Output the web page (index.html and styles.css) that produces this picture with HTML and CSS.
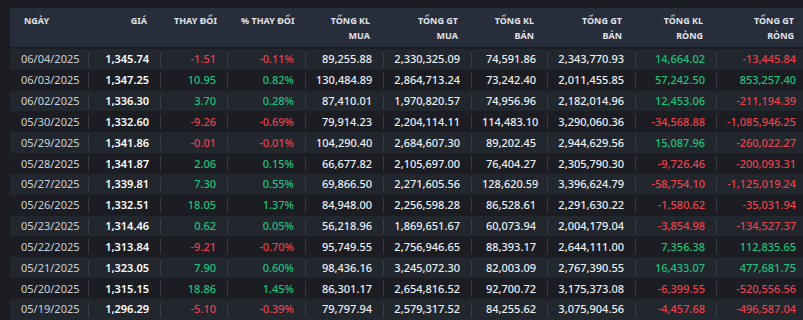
FILE: index.html
```html
<!DOCTYPE html>
<html lang="vi">
<head>
    <meta charset="UTF-8">
    <meta name="viewport" content="width=device-width, initial-scale=1.0">
    <title>Lịch sử giao dịch</title>
    <link rel="stylesheet" href="styles.css">
</head>
<body>
    <div class="table-wrap">
        <table class="trade-table">
            <colgroup>
                <col class="w-date"><col class="w-price"><col class="w-chg"><col class="w-pct">
                <col class="w-klmua"><col class="w-gtmua"><col class="w-klban"><col class="w-gtban">
                <col class="w-klrong"><col class="w-gtrong">
            </colgroup>
            <thead>
                <tr>
                    <th class="left">NGÀY</th>
                    <th>GIÁ</th>
                    <th>THAY ĐỔI</th>
                    <th>% THAY ĐỔI</th>
                    <th>TỔNG KL<br>MUA</th>
                    <th>TỔNG GT<br>MUA</th>
                    <th>TỔNG KL<br>BÁN</th>
                    <th>TỔNG GT<br>BÁN</th>
                    <th>TỔNG KL<br>RÒNG</th>
                    <th>TỔNG GT<br>RÒNG</th>
                </tr>
            </thead>
            <tbody>
                <tr><td class="date">06/04/2025</td><td class="price">1,345.74</td><td class="down">-1.51</td><td class="down">-0.11%</td><td>89,255.88</td><td>2,330,325.09</td><td>74,591.86</td><td>2,343,770.93</td><td class="up">14,664.02</td><td class="down">-13,445.84</td></tr>
                <tr><td class="date">06/03/2025</td><td class="price">1,347.25</td><td class="up">10.95</td><td class="up">0.82%</td><td>130,484.89</td><td>2,864,713.24</td><td>73,242.40</td><td>2,011,455.85</td><td class="up">57,242.50</td><td class="up">853,257.40</td></tr>
                <tr><td class="date">06/02/2025</td><td class="price">1,336.30</td><td class="up">3.70</td><td class="up">0.28%</td><td>87,410.01</td><td>1,970,820.57</td><td>74,956.96</td><td>2,182,014.96</td><td class="up">12,453.06</td><td class="down">-211,194.39</td></tr>
                <tr><td class="date">05/30/2025</td><td class="price">1,332.60</td><td class="down">-9.26</td><td class="down">-0.69%</td><td>79,914.23</td><td>2,204,114.11</td><td>114,483.10</td><td>3,290,060.36</td><td class="down">-34,568.88</td><td class="down">-1,085,946.25</td></tr>
                <tr><td class="date">05/29/2025</td><td class="price">1,341.86</td><td class="down">-0.01</td><td class="down">-0.01%</td><td>104,290.40</td><td>2,684,607.30</td><td>89,202.45</td><td>2,944,629.56</td><td class="up">15,087.96</td><td class="down">-260,022.27</td></tr>
                <tr><td class="date">05/28/2025</td><td class="price">1,341.87</td><td class="up">2.06</td><td class="up">0.15%</td><td>66,677.82</td><td>2,105,697.00</td><td>76,404.27</td><td>2,305,790.30</td><td class="down">-9,726.46</td><td class="down">-200,093.31</td></tr>
                <tr><td class="date">05/27/2025</td><td class="price">1,339.81</td><td class="up">7.30</td><td class="up">0.55%</td><td>69,866.50</td><td>2,271,605.56</td><td>128,620.59</td><td>3,396,624.79</td><td class="down">-58,754.10</td><td class="down">-1,125,019.24</td></tr>
                <tr><td class="date">05/26/2025</td><td class="price">1,332.51</td><td class="up">18.05</td><td class="up">1.37%</td><td>84,948.00</td><td>2,256,598.28</td><td>86,528.61</td><td>2,291,630.22</td><td class="down">-1,580.62</td><td class="down">-35,031.94</td></tr>
                <tr><td class="date">05/23/2025</td><td class="price">1,314.46</td><td class="up">0.62</td><td class="up">0.05%</td><td>56,218.96</td><td>1,869,651.67</td><td>60,073.94</td><td>2,004,179.04</td><td class="down">-3,854.98</td><td class="down">-134,527.37</td></tr>
                <tr><td class="date">05/22/2025</td><td class="price">1,313.84</td><td class="down">-9.21</td><td class="down">-0.70%</td><td>95,749.55</td><td>2,756,946.65</td><td>88,393.17</td><td>2,644,111.00</td><td class="up">7,356.38</td><td class="up">112,835.65</td></tr>
                <tr><td class="date">05/21/2025</td><td class="price">1,323.05</td><td class="up">7.90</td><td class="up">0.60%</td><td>98,436.16</td><td>3,245,072.30</td><td>82,003.09</td><td>2,767,390.55</td><td class="up">16,433.07</td><td class="up">477,681.75</td></tr>
                <tr><td class="date">05/20/2025</td><td class="price">1,315.15</td><td class="up">18.86</td><td class="up">1.45%</td><td>86,301.17</td><td>2,654,816.52</td><td>92,700.72</td><td>3,175,373.08</td><td class="down">-6,399.55</td><td class="down">-520,556.56</td></tr>
                <tr><td class="date">05/19/2025</td><td class="price">1,296.29</td><td class="down">-5.10</td><td class="down">-0.39%</td><td>79,797.94</td><td>2,579,317.52</td><td>84,255.62</td><td>3,075,904.56</td><td class="down">-4,457.68</td><td class="down">-496,587.04</td></tr>
            </tbody>
        </table>
    </div>
</body>
</html>
```

FILE: styles.css
```css
:root {
    --page-bg: #1b1d22;
    --head-bg: #272d3a;
    --stripe-bg: #22262d;
    --head-text: #e0e3e9;
    --text: #eceef2;
    --muted: #cdd0d6;
    --up: #1cc27b;
    --down: #e8424e;
    --divider: #373b44;
}

* {
    margin: 0;
    padding: 0;
    box-sizing: border-box;
}

body {
    background-color: var(--page-bg);
    font-family: 'Noto Sans', 'Open Sans', sans-serif;
    color: var(--text);
    overflow: hidden;
}

.table-wrap {
    padding: 8px 0 0 10px;
}

.trade-table {
    width: 797px;
    table-layout: fixed;
    border-collapse: separate;
    border-spacing: 0;
}

.w-date { width: 78px; }
.w-price { width: 72px; }
.w-chg { width: 67px; }
.w-pct { width: 78px; }
.w-klmua { width: 78px; }
.w-gtmua { width: 88px; }
.w-klban { width: 76px; }
.w-gtban { width: 88px; }
.w-klrong { width: 81px; }
.w-gtrong { width: 91px; }

.trade-table th {
    background-color: var(--head-bg);
    border-bottom: 2px solid var(--page-bg);
    color: var(--head-text);
    font-size: 9px;
    font-weight: 700;
    line-height: 15px;
    height: 41px;
    padding: 5px 13px 4px 14px;
    text-align: right;
    vertical-align: top;
    white-space: nowrap;
}

.trade-table th.left {
    text-align: left;
}

.trade-table td {
    height: 20.83px;
    padding: 0 11px;
    font-size: 11px;
    font-weight: 500;
    line-height: 14px;
    text-align: right;
    white-space: nowrap;
    vertical-align: middle;
}

/* short divider between body cells */
.trade-table td + td {
    background-image: linear-gradient(var(--divider), var(--divider));
    background-size: 1px 15px;
    background-position: left center;
    background-repeat: no-repeat;
}

.trade-table tbody tr:nth-child(odd) {
    background-color: var(--stripe-bg);
}

.trade-table td.date {
    text-align: left;
    color: var(--muted);
    font-weight: 400;
}

.trade-table td.price {
    color: #ffffff;
    font-weight: 600;
}

.trade-table td.up {
    color: var(--up);
}

.trade-table td.down {
    color: var(--down);
}
```
